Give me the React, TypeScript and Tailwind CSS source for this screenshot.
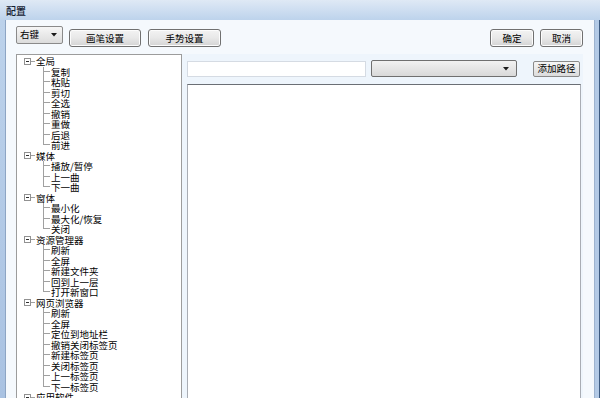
import React from "react";

const TREE: { root: string; items: string[] }[] = [
  { root: "全局", items: ["复制", "粘贴", "剪切", "全选", "撤销", "重做", "后退", "前进"] },
  { root: "媒体", items: ["播放/暂停", "上一曲", "下一曲"] },
  { root: "窗体", items: ["最小化", "最大化/恢复", "关闭"] },
  { root: "资源管理器", items: ["刷新", "全屏", "新建文件夹", "回到上一层", "打开新窗口"] },
  {
    root: "网页浏览器",
    items: ["刷新", "全屏", "定位到地址栏", "撤销关闭标签页", "新建标签页", "关闭标签页", "上一标签页", "下一标签页"],
  },
  { root: "应用软件", items: [] },
];

const font = "font-['Noto_Sans_CJK_SC','Noto_Sans',sans-serif]";

function Btn({ label, w }: { label: string; w: string }) {
  return (
    <button
      className={`${w} h-[18px] rounded-[3px] border border-[#707070] bg-gradient-to-b from-[#f3f3f3] via-[#e8e8e8] to-[#d4d4d4] text-[9.5px] leading-none text-black shadow-[inset_0_0_0_1px_#fcfcfc]`}
    >
      {label}
    </button>
  );
}

function Arrow() {
  return (
    <svg width="6" height="4" viewBox="0 0 6 4" className="shrink-0">
      <path d="M0 0h6L3 3.5z" fill="#1a1a1a" />
    </svg>
  );
}

function TreeGroup({ root, items }: { root: string; items: string[] }) {
  return (
    <div>
      <div className="flex h-[10.5px] items-center">
        <div className="w-[7px] shrink-0" />
        <div className="flex h-[7px] w-[7px] shrink-0 items-center justify-center border border-[#919191] bg-white">
          <div className="h-px w-[3px] bg-[#303030]" />
        </div>
        <div className="h-px w-[4px] shrink-0 bg-[#a0a0a0]" />
        <span className="pl-px text-[9.5px] leading-[10px]">{root}</span>
      </div>
      {items.map((t, i) => {
        const last = i === items.length - 1;
        return (
          <div key={i} className="flex h-[10.5px] items-center">
            <div className="w-[26px] shrink-0" />
            {last ? (
              <div className="h-full w-[7px] shrink-0">
                <div className="h-1/2 border-b border-l border-[#a0a0a0]" />
              </div>
            ) : (
              <div className="h-full w-[7px] shrink-0 border-l border-[#a0a0a0]">
                <div className="h-1/2 border-b border-[#a0a0a0]" />
              </div>
            )}
            <span className="pl-px text-[9.5px] leading-[10px]">{t}</span>
          </div>
        );
      })}
    </div>
  );
}

export default function App() {
  return (
    <div className={`flex h-[398px] w-[600px] flex-col overflow-hidden bg-[#c3d6ed] ${font} text-black`}>
      <div className="flex h-[20px] shrink-0 items-center bg-gradient-to-b from-[#dfe9f5] to-[#bdd3ec] pl-[6px] text-[10px] font-medium text-[#142032]">
        配置
      </div>
      <div className="flex min-h-0 flex-1">
        <div className="w-[6px] shrink-0 border-r border-[#8da5c4] bg-gradient-to-b from-[#bcd2eb] to-[#a9c2e2]" />
        <div className="flex min-w-0 flex-1 flex-col bg-[#f5f9fd] pl-[10px] pr-[11px] pt-[6px]">
          <div className="flex h-[18px] items-center">
            <div className="flex h-[18px] w-[47px] items-center justify-between rounded-[2px] border border-[#8a8a8a] bg-gradient-to-b from-[#f6f6f6] to-[#dcdcdc] pl-[3px] pr-[5px] text-[9.5px]">
              <span className="leading-none">右键</span>
              <Arrow />
            </div>
            <div className="ml-[6px]">
              <Btn label="画笔设置" w="w-[72px]" />
            </div>
            <div className="ml-[7px]">
              <Btn label="手势设置" w="w-[73px]" />
            </div>
            <div className="ml-auto">
              <Btn label="确定" w="w-[44px]" />
            </div>
            <div className="ml-[6px]">
              <Btn label="取消" w="w-[43px]" />
            </div>
          </div>
          <div className="mt-[10px] flex min-h-0 flex-1">
            <div className="w-[166px] shrink-0 border border-b-0 border-[#9c9c9c] bg-white pt-px">
              {TREE.map((g) => (
                <TreeGroup key={g.root} root={g.root} items={g.items} />
              ))}
            </div>
            <div className="flex min-w-0 flex-1 flex-col bg-[#eef5fc] pl-[5px] pt-[6px]">
              <div className="flex items-center pr-[3px]">
                <div className="h-[16px] w-[179px] border border-[#d5dbe3] bg-white" />
                <div className="ml-[5px] flex h-[17px] w-[146px] items-center justify-end rounded-[2px] border border-[#707070] bg-gradient-to-b from-[#f2f2f2] to-[#d9d9d9] pr-[7px]">
                  <Arrow />
                </div>
                <button className="ml-auto h-[16px] w-[47px] rounded-[2px] border border-[#8a8a8a] bg-gradient-to-b from-[#f6f6f6] to-[#dcdcdc] text-[9.5px] leading-none">
                  添加路径
                </button>
              </div>
              <div className="mt-[7px] flex min-h-0 flex-1 pr-[2px]">
                <div className="flex-1 border border-b-0 border-[#a9adb4] border-t-[#6b6f75] bg-white" />
              </div>
            </div>
          </div>
        </div>
        <div className="w-[6px] shrink-0 border-l border-r border-l-[#9db3cf] border-r-[#3c5a80] bg-[#b3cae6]" />
      </div>
    </div>
  );
}
